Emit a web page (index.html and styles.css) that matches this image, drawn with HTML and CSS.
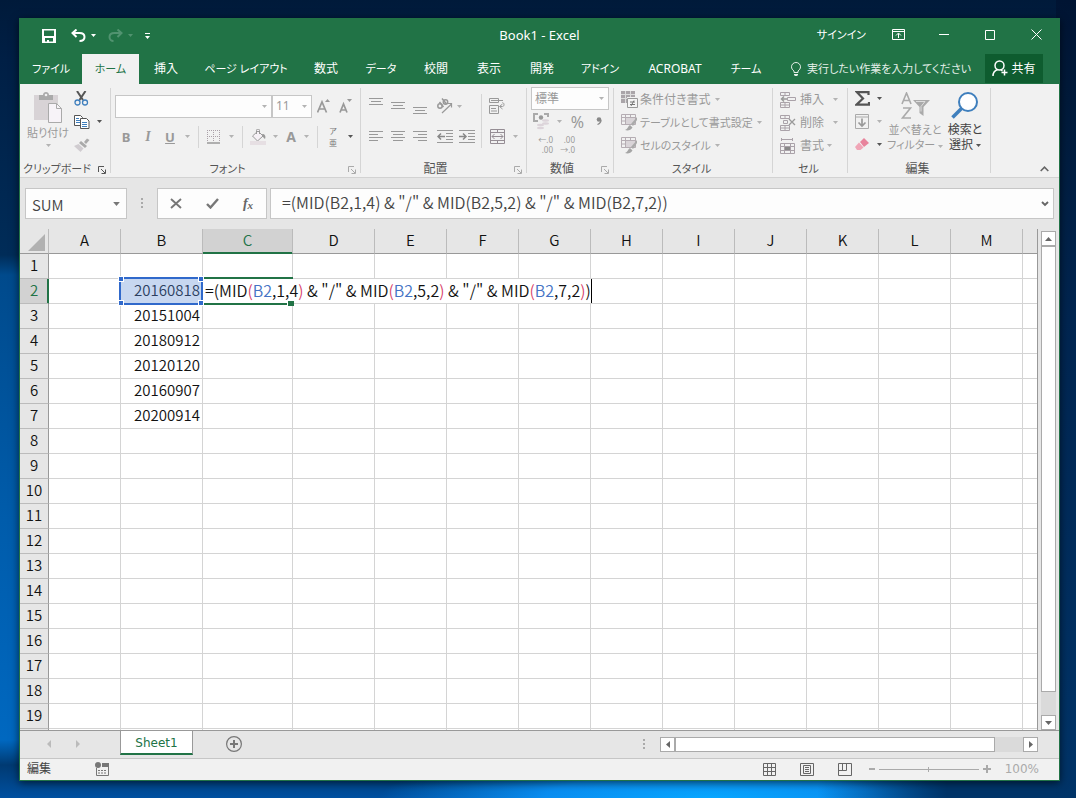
FILE: index.html
```html
<!DOCTYPE html>
<html lang="ja">
<head>
<meta charset="utf-8">
<title>Book1 - Excel</title>
<link rel="stylesheet" href="styles.css">
</head>
<body>
<svg class="sprite" aria-hidden="true">
  <symbol id="arrow" viewBox="0 0 5 3"><path d="M0 0h5L2.500 3z" fill="currentColor"/></symbol>
  <symbol id="launcher" viewBox="0 0 8 8"><path d="M.5 6V.5H6M3 3l4 4M7.500 3.500v4h-4" fill="none" stroke="currentColor"/></symbol>
  <symbol id="table-brush" viewBox="0 0 17 17"><path d="M.5.500h14v10H.5zM.5 3.500h14M.5 7h14M4.500.500v10M9.500.500v10" fill="none" stroke="#b5adb3"/><path d="M5 4h9v6H5z" fill="#d9d4d8"/><path d="M16 3l-6 7 2 2 4-6z" fill="#aaa"/><path d="M9 11l2.500 2.500C10 16 7 17 4 16c3-1 3-4 5-5z" fill="#a5a5a5"/></symbol>
</svg>
<main class="window">
  <header class="titlebar">
    <div class="quick">
      <button class="icon-btn w22" aria-label="上書き保存"><svg width="14" height="14" viewBox="0 0 14 14"><path fill="#fff" fill-rule="evenodd" d="M0 0h14v14H0zM2 1.500v5.500h10V1.500zM3 9v3.500h2V11h2v1.500h4V9z"/></svg></button>
      <button class="icon-btn w22" aria-label="元に戻す"><svg width="15" height="13" viewBox="0 0 15 13"><path d="M5.500 0.500L1.500 4l4 4M2 4h6.500c3 0 5 1.500 5 4s-2 4-5 4" fill="none" stroke="#fff" stroke-width="2"/></svg></button>
      <button class="icon-btn w12" aria-label="元に戻す一覧"><svg class="arrow"><use href="#arrow"/></svg></button>
      <button class="icon-btn w22 redo" aria-label="やり直し"><svg width="15" height="13" viewBox="0 0 15 13"><path d="M9.500 0.500L13.500 4l-4 4M13 4H6.500c-3 0-5 1.500-5 4s2 4 4 4" fill="none" stroke="#519370" stroke-width="2"/></svg></button>
      <button class="icon-btn w12 redo" aria-label="やり直し一覧"><svg class="arrow"><use href="#arrow"/></svg></button>
      <button class="icon-btn custom" aria-label="カスタマイズ"><svg width="5" height="6" viewBox="0 0 5 6"><path d="M0 0h5v1H0zM0 3h5L2.500 6z" fill="#fff"/></svg></button>
    </div>
    <h1 class="title">Book1 - Excel</h1>
    <div class="caption">
      <button class="signin kana">サインイン</button>
      <button class="icon-btn cap" aria-label="リボンの表示オプション"><svg width="13" height="11" viewBox="0 0 13 11"><path d="M.5.500h12v10H.5zM.5 2.500h12M6.500 9V4.500M4 6.500l2.500-2.500L9 6.500" fill="none" stroke="#fff"/></svg></button>
      <button class="icon-btn cap" aria-label="最小化"><svg width="10" height="11" viewBox="0 0 10 11"><path d="M0 5.500h10" stroke="#fff"/></svg></button>
      <button class="icon-btn cap" aria-label="最大化"><svg width="10" height="10" viewBox="0 0 10 10"><path d="M.5.500h9v9h-9z" fill="none" stroke="#fff"/></svg></button>
      <button class="icon-btn cap" aria-label="閉じる"><svg width="11" height="11" viewBox="0 0 11 11"><path d="M.5.500l10 10M10.500.500l-10 10" stroke="#fff"/></svg></button>
    </div>
  </header>

  <nav class="tabs">
    <button class="kana">ファイル</button><button class="kana active">ホーム</button><button>挿入</button><button class="kana">ページ レイアウト</button><button>数式</button><button class="kana">データ</button><button>校閲</button><button>表示</button><button>開発</button><button class="kana">アドイン</button><button>ACROBAT</button><button class="kana">チーム</button>
    <button class="tell kana"><svg width="10" height="14" viewBox="0 0 10 14"><path d="M3 10.500V9C1.500 8 .5 6.500.5 4.800a4.500 4.300 0 0 1 9 0C9.500 6.500 8.500 8 7 9v1.500zM3 12.500h4M3.500 13.500h3" fill="none" stroke="#e4efe8"/></svg>実行したい作業を入力してください</button>
    <button class="share"><svg width="16" height="17" viewBox="0 0 16 17"><circle cx="7.500" cy="5.500" r="4.500" fill="none" stroke="#fff" stroke-width="1.500"/><path d="M1 16c0-3 2-5.500 4.500-6.500M9 10l1.500 1M12.500 9.500v6M9.500 12.500h6" fill="none" stroke="#fff" stroke-width="1.500"/></svg>共有</button>
  </nav>

  <section class="ribbon">
    <div class="group g-clip">
      <div class="body">
        <button class="big dim kana paste">
          <svg width="29" height="31" viewBox="0 0 29 31"><path d="M0 3h24v25H0z" fill="#d8d3d6"/><path d="M5 8V3h4c0-4 6-4 6 0h4v5z" fill="#aaa"/><circle cx="12" cy="3" r="1.300" fill="#f1f1f1"/><path d="M14.500 11.500h8l5 5v14h-13z" fill="#f7f3f8" stroke="#aaa"/><path d="M22.500 11.500v5h5" fill="none" stroke="#aaa"/></svg>
          <span>貼り付け</span><svg class="arrow"><use href="#arrow"/></svg>
        </button>
        <div class="stack">
          <button class="icon-btn line" aria-label="切り取り"><svg width="15" height="15" viewBox="0 0 15 15"><path d="M3 0l6 9M11.500 0l-6 9" stroke="#555" stroke-width="2"/><circle cx="3.500" cy="11.500" r="2.500" fill="none" stroke="#3f7fbd" stroke-width="1.300"/><circle cx="11" cy="11.500" r="2.500" fill="none" stroke="#3f7fbd" stroke-width="1.300"/></svg></button>
          <button class="icon-btn line" aria-label="コピー"><svg width="16" height="14" viewBox="0 0 16 14"><path d="M.5.500h6l2 2v8h-8z" fill="#fff" stroke="#555"/><path d="M2 3.500h3M2 5.500h4M2 7.500h4" stroke="#3f7fbd"/><path d="M6.500 3.500h6l2.500 2.500v7.500H6.500z" fill="#fff" stroke="#555"/><path d="M8 7.500h5M8 9.500h5M8 11.500h5" stroke="#3f7fbd"/></svg><svg class="arrow dark"><use href="#arrow"/></svg></button>
          <button class="icon-btn line" aria-label="書式のコピー"><svg width="16" height="14" viewBox="0 0 16 14"><path d="M15.500 2L13 .5 10 4l2 2z" fill="#aaa"/><path d="M7 3l6 5-2 2-6-5z" fill="#aaa"/><path d="M4.500 6l5 4.500L6.500 14 0 8z" fill="#d0ccd0"/></svg></button>
        </div>
      </div>
      <footer class="kana"><span>クリップボード</span><svg class="launch dark"><use href="#launcher"/></svg></footer>
    </div>

    <div class="group g-font">
      <div class="body rows">
        <div class="row first">
          <label class="combo font-name"><select aria-label="フォント"><option></option></select><svg class="arrow"><use href="#arrow"/></svg></label>
          <label class="combo font-size"><select aria-label="サイズ"><option>11</option></select><svg class="arrow"><use href="#arrow"/></svg></label>
          <button class="icon-btn w22" aria-label="拡大"><svg width="13" height="15" viewBox="0 0 13 15"><path d="M.5 13.500L5 3l4.500 10.500M2 10h6" fill="none" stroke="#999" stroke-width="1.700"/><path d="M8 3l2.500-3L13 3z" fill="#999"/></svg></button>
          <button class="icon-btn w22" aria-label="縮小"><svg width="13" height="15" viewBox="0 0 13 15"><path d="M1 13.500L4.500 5 8 13.500M2 11h5" fill="none" stroke="#999" stroke-width="1.700"/><path d="M8 0h5l-2.500 3z" fill="#999"/></svg></button>
        </div>
        <div class="row">
          <button class="icon-btn w22 glyph"><b>B</b></button><button class="icon-btn w22 glyph"><i>I</i></button><button class="icon-btn w22 glyph"><u>U</u></button>
          <button class="icon-btn w12" aria-label="下線の種類"><svg class="arrow"><use href="#arrow"/></svg></button>
          <span class="sep"></span>
          <button class="icon-btn w22" aria-label="罫線"><svg width="14" height="14" viewBox="0 0 14 14"><path d="M.5 0v12M6.500 0v12M12.500 0v12M0 .5h13M0 6.500h13" stroke="#aaa0a8" stroke-dasharray="1 1" fill="none"/><path d="M0 13h13" stroke="#999" stroke-width="1.500"/></svg></button>
          <button class="icon-btn w12" aria-label="罫線の種類"><svg class="arrow"><use href="#arrow"/></svg></button>
          <span class="sep"></span>
          <button class="icon-btn w22" aria-label="塗りつぶし"><svg width="17" height="16" viewBox="0 0 17 16"><path d="M2.500 7L8 2l5 5-5.500 5zM6.500 5V1.500a1.500 1.500 0 0 1 3 0V5" fill="#f6f1f6" stroke="#999"/><path d="M12 5c3 0 4 2 3 5-2-1-2-3-3-5z" fill="#999"/><path d="M0 12h16v4H0z" fill="#e6dfe3"/></svg></button>
          <button class="icon-btn w12" aria-label="塗りつぶしの色"><svg class="arrow"><use href="#arrow"/></svg></button>
          <button class="icon-btn fcolor"><span>A</span></button>
          <button class="icon-btn w12" aria-label="文字色"><svg class="arrow"><use href="#arrow"/></svg></button>
          <span class="sep"></span>
          <button class="icon-btn ruby" aria-label="ふりがな"><span>ア</span><span>亜</span></button>
          <button class="icon-btn w12" aria-label="ふりがなの設定"><svg class="arrow dark"><use href="#arrow"/></svg></button>
        </div>
      </div>
      <footer class="kana"><span>フォント</span><svg class="launch"><use href="#launcher"/></svg></footer>
    </div>

    <div class="group g-align">
      <div class="body">
        <div class="rows">
        <div class="row first">
          <button class="icon-btn w22" aria-label="上揃え"><svg width="14" height="20" viewBox="0 0 14 20"><path d="M0 2.500h14M2 5.500h10M0 8.500h14" stroke="#999"/></svg></button>
          <button class="icon-btn w22" aria-label="上下中央揃え"><svg width="14" height="20" viewBox="0 0 14 20"><path d="M0 6.500h14M2 9.500h10M0 12.500h14" stroke="#999"/></svg></button>
          <button class="icon-btn w22" aria-label="下揃え"><svg width="14" height="20" viewBox="0 0 14 20"><path d="M0 11.500h14M2 14.500h10M0 17.500h14" stroke="#999"/></svg></button>
          <button class="icon-btn orient" aria-label="方向"><svg width="17" height="16" viewBox="0 0 17 16"><g fill="none" stroke="#999" stroke-width="1.500"><circle cx="4" cy="8" r="2.200"/><path d="M3.500 4l4 5M6 .5l4.500 5.500"/><circle cx="9.500" cy="4" r="2.200"/><path d="M6 15l9.500-9M15.500 9.500V5.500H11.500" stroke-width="1.200"/></g></svg><svg class="arrow"><use href="#arrow"/></svg></button>
        </div>
        <div class="row">
          <button class="icon-btn w22" aria-label="左揃え"><svg width="14" height="11" viewBox="0 0 14 11"><path d="M0 .5h14M0 3.500h9M0 6.500h14M0 9.500h9" stroke="#999"/></svg></button>
          <button class="icon-btn w22" aria-label="中央揃え"><svg width="14" height="11" viewBox="0 0 14 11"><path d="M0 .5h14M2 3.500h10M0 6.500h14M2 9.500h10" stroke="#999"/></svg></button>
          <button class="icon-btn w22" aria-label="右揃え"><svg width="14" height="11" viewBox="0 0 14 11"><path d="M0 .5h14M5 3.500h9M0 6.500h14M5 9.500h9" stroke="#999"/></svg></button>
          <span class="gap"></span>
          <button class="icon-btn w22" aria-label="インデントを減らす"><svg width="16" height="13" viewBox="0 0 16 13"><path d="M0 .5h16M9 3.500h7M9 6.500h7M9 9.500h7M0 12.500h16" stroke="#999"/><path d="M8 6.500H1M4 3.500l-3 3 3 3" fill="none" stroke="#888" stroke-width="1.500"/></svg></button>
          <button class="icon-btn w22" aria-label="インデントを増やす"><svg width="16" height="13" viewBox="0 0 16 13"><path d="M0 .5h16M9 3.500h7M9 6.500h7M9 9.500h7M0 12.500h16" stroke="#999"/><path d="M0 6.500h7M4 3.500l3 3-3 3" fill="none" stroke="#888" stroke-width="1.500"/></svg></button>
        </div>
        </div>
        <span class="sep tall"></span>
        <div class="rows">
          <div class="row first"><button class="icon-btn w22" aria-label="折り返し"><svg width="17" height="16" viewBox="0 0 17 16"><path d="M.5.500h9v4h-9zM2 2.500h12M.5 7.500h9v8h-9zM2 10.500h5M2 13h6M11 8.500h2.500c2 0 2-3.500 0-4M13.500 6l-3 2.500 3 2.500" fill="none" stroke="#999"/></svg></button></div>
          <div class="row"><button class="icon-btn w22" aria-label="結合"><svg width="15" height="15" viewBox="0 0 15 15"><path d="M.5.500h14v14H.5zM.5 3.500h14M.5 11.500h14M7.500.500v3M7.500 11.500v3M2 7.500h11M4.500 5l-2.500 2.500L4.500 10M10.500 5L13 7.500 10.500 10" fill="none" stroke="#958d94"/></svg></button><button class="icon-btn w12" aria-label="結合の種類"><svg class="arrow"><use href="#arrow"/></svg></button></div>
        </div>
      </div>
      <footer><span>配置</span><svg class="launch"><use href="#launcher"/></svg></footer>
    </div>

    <div class="group g-num">
      <div class="body rows tight">
        <label class="combo number-format"><select aria-label="表示形式"><option>標準</option></select><svg class="arrow"><use href="#arrow"/></svg></label>
        <div class="row"><button class="icon-btn w22" aria-label="通貨"><svg width="17" height="17" viewBox="0 0 17 17"><path d="M1 5V1h4M11 1h4v3M1 5v3h4" fill="none" stroke="#aaa" stroke-width="2"/><circle cx="8" cy="4.500" r="2.200" fill="#999"/><g fill="#dcd4da"><ellipse cx="12.500" cy="7.500" rx="3.500" ry="1.200"/><ellipse cx="12.500" cy="10.500" rx="3.500" ry="1.200"/><ellipse cx="7.500" cy="12" rx="3.500" ry="1.200"/><ellipse cx="7.500" cy="15" rx="3.500" ry="1.200"/></g></svg></button>
        <button class="icon-btn w12" aria-label="通貨の種類"><svg class="arrow"><use href="#arrow"/></svg></button>
        <button class="icon-btn w22 pct">%</button><button class="icon-btn w22" aria-label="桁区切り"><svg width="6" height="10" viewBox="0 0 6 10"><circle cx="3" cy="2.500" r="2.300" fill="#888"/><path d="M5 3c0 2-1 3.500-3.500 4.500" fill="none" stroke="#888" stroke-width="1.300"/></svg></button></div>
        <div class="row"><button class="icon-btn w22 dec"><span>←.0</span><span>.00</span></button><button class="icon-btn w22 dec"><span>.00</span><span>→.0</span></button></div>
      </div>
      <footer><span>数値</span><svg class="launch"><use href="#launcher"/></svg></footer>
    </div>

    <div class="group g-style">
      <div class="body list">
        <button><svg width="17" height="17" viewBox="0 0 17 17"><path d="M0 0h14v6H0zM0 6h6v6H0z" fill="#aaa5a9"/><path d="M0 3.500h14M4.500 0v12M9.500 0v6M0 7.500h6" stroke="#ddd"/><path d="M6.500 7.500h10v9h-10z" fill="#f5f5f5" stroke="#999"/><path d="M9 11h5M9 13.500h5M13 9.500l-3 5.500" stroke="#777"/></svg>条件付き書式<svg class="arrow"><use href="#arrow"/></svg></button>
        <button class="kana"><svg width="17" height="17"><use href="#table-brush"/></svg>テーブルとして書式設定<svg class="arrow"><use href="#arrow"/></svg></button>
        <button class="kana"><svg width="17" height="17"><use href="#table-brush"/></svg>セルのスタイル<svg class="arrow"><use href="#arrow"/></svg></button>
      </div>
      <footer class="kana"><span>スタイル</span></footer>
    </div>

    <div class="group g-cell">
      <div class="body list">
        <button><svg width="17" height="16" viewBox="0 0 17 16"><path d="M.5.500h9v3h-9zM5 .5v3M.5 10.500h9v5h-9zM.5 13h9M5 10.500v5M7.500 5.500h8v3h-8z" fill="none" stroke="#aaa2a9"/><path d="M7 7H1.500M4 4.500L1.500 7 4 9.500" fill="none" stroke="#999" stroke-width="1.500"/></svg><span>挿入</span><svg class="arrow"><use href="#arrow"/></svg></button>
        <button><svg width="17" height="16" viewBox="0 0 17 16"><path d="M.5.500h9v3h-9zM5 .5v3M.5 10.500h9v5h-9zM.5 13h9M5 10.500v5M3.500 5.500h4v3h-4z" fill="none" stroke="#aaa2a9"/><path d="M9 4l6 6M15 4l-6 6" stroke="#999" stroke-width="1.300"/></svg><span>削除</span><svg class="arrow"><use href="#arrow"/></svg></button>
        <button><svg width="17" height="16" viewBox="0 0 17 16"><path d="M1.500 0v3M12.500 0v3M2 1.500h10M.5 5.500h14v10H.5zM.5 8.500h14M.5 12.500h14M4.500 5.500v10M10.500 5.500v10" fill="none" stroke="#aaa2a9"/><path d="M5 9h5v3H5z" fill="#888"/></svg><span class="short">書式</span><svg class="arrow"><use href="#arrow"/></svg></button>
      </div>
      <footer class="kana"><span>セル</span></footer>
    </div>

    <div class="group g-edit">
      <div class="body">
        <div class="stack">
          <button class="icon-btn line" aria-label="オート SUM"><svg width="15" height="15" viewBox="0 0 15 15"><path d="M13.500 4V1.200H2L8 7.500l-6.500 6.200h12.500V11" fill="none" stroke="#555" stroke-width="2.200"/></svg><svg class="arrow dark"><use href="#arrow"/></svg></button>
          <button class="icon-btn line" aria-label="フィル"><svg width="15" height="15" viewBox="0 0 15 15"><path d="M.5.500h13v14H.5zM.5 3h13" fill="none" stroke="#aaa"/><path d="M7 4.500V12M3.500 8.500L7 12l3.500-3.500" fill="none" stroke="#999" stroke-width="1.700"/></svg><svg class="arrow"><use href="#arrow"/></svg></button>
          <button class="icon-btn line" aria-label="クリア"><svg width="15" height="13" viewBox="0 0 15 13"><path d="M9 0l5 5-5 4-4-5z" fill="#e8839c"/><path d="M4 4.500L8.500 9.500 5.500 12H2L0 9z" fill="#f0a5b6"/></svg><svg class="arrow dark"><use href="#arrow"/></svg></button>
        </div>
        <button class="big dim kana sort"><svg width="29" height="30" viewBox="0 0 29 30"><path d="M1 12L5.500 1 10 12M2.500 8.500h6M2 16h7.500L1.500 26H10" fill="none" stroke="#aaa" stroke-width="1.600"/><path d="M12 8h17l-6.500 7v9l-4-3v-6z" fill="#aaa"/><path d="M15 9.500h9l-4 5v5" fill="none" stroke="#ddd"/></svg><span>並べ替えと<br>フィルター <svg class="arrow"><use href="#arrow"/></svg></span></button>
        <button class="big find"><svg width="28" height="30" viewBox="0 0 28 30"><circle cx="17" cy="10" r="9" fill="#fff" stroke="#3f7fbd" stroke-width="2"/><path d="M10.500 16.500L1.500 25.500" stroke="#3f7fbd" stroke-width="3.500"/></svg><span>検索と<br>選択 <svg class="arrow dark"><use href="#arrow"/></svg></span></button>
      </div>
      <footer><span>編集</span></footer>
    </div>
    <button class="icon-btn collapse" aria-label="リボンを折りたたむ"><svg width="9" height="6" viewBox="0 0 9 6"><path d="M.7 5l3.800-3.800L8.300 5" fill="none" stroke="#666" stroke-width="1.600"/></svg></button>
  </section>

  <section class="formula">
    <label class="combo name-box"><select aria-label="名前ボックス"><option>SUM</option></select><svg class="arrow wide"><use href="#arrow"/></svg></label>
    <svg class="dots" width="2" height="11" viewBox="0 0 2 11"><path d="M0 0h2v2H0zM0 4h2v2H0zM0 8h2v2H0z" fill="#aaa"/></svg>
    <div class="fx-box">
      <button class="icon-btn" aria-label="キャンセル"><svg width="12" height="11" viewBox="0 0 12 11"><path d="M1 1l10 9M11 1L1 10" stroke="#777" stroke-width="1.900"/></svg></button>
      <button class="icon-btn" aria-label="入力"><svg width="13" height="11" viewBox="0 0 13 11"><path d="M1 6l3.500 3.500L12 1" fill="none" stroke="#777" stroke-width="2.400"/></svg></button>
      <button class="icon-btn fx"><i>f</i><small>x</small></button>
    </div>
    <div class="formula-field"><input type="text" aria-label="数式バー" value='=(MID(B2,1,4) &amp; "/" &amp; MID(B2,5,2) &amp; "/" &amp; MID(B2,7,2))'><button class="icon-btn" aria-label="展開"><svg width="8" height="6" viewBox="0 0 8 6"><path d="M1 1l3 3 3-3" fill="none" stroke="#666" stroke-width="1.900"/></svg></button></div>
  </section>

  <section class="sheet">
    <div class="grid-view">
      <table class="cells">
        <colgroup><col class="c-head"><col class="c-std"><col class="c-mid"><col class="c-wide"><col class="c-mid"><col class="c-std" span="9"><col></colgroup>
        <thead><tr><th class="corner"><svg width="17" height="17" viewBox="0 0 17 17"><path d="M17 0v17H0z" fill="#b1b1b1"/></svg></th><th>A</th><th>B</th><th class="sel">C</th><th>D</th><th>E</th><th>F</th><th>G</th><th>H</th><th>I</th><th>J</th><th>K</th><th>L</th><th>M</th><th></th></tr></thead>
        <tbody id="rows">
          <tr><th>1</th><td></td><td></td><td></td><td></td><td></td><td></td><td></td><td></td><td></td><td></td><td></td><td></td><td></td><td></td></tr>
          <tr><th class="sel">2</th><td></td><td class="ref">20160818<span class="ref-box"><i></i><i></i><i></i><i></i></span></td><td class="edit"><div class="editor" contenteditable="true" spellcheck="false">=(MID<span class="p">(</span><span class="r">B2</span>,1,4<span class="p">)</span> &amp; "/" &amp; MID<span class="p">(</span><span class="r">B2</span>,5,2<span class="p">)</span> &amp; "/" &amp; MID<span class="p">(</span><span class="r">B2</span>,7,2<span class="p">)</span>)</div><span class="edit-box"></span></td><td></td><td></td><td></td><td></td><td></td><td></td><td></td><td></td><td></td><td></td><td></td></tr>
        </tbody>
      </table>
    </div>
    <div class="vscroll"><button class="sb" aria-label="上"><svg width="7" height="4" viewBox="0 0 7 4"><path d="M0 4h7L3.500 0z" fill="#666"/></svg></button><div class="track"><div class="thumb"></div></div><button class="sb" aria-label="下"><svg width="7" height="4" viewBox="0 0 7 4"><path d="M0 0h7L3.500 4z" fill="#666"/></svg></button></div>
  </section>

  <section class="sheet-bar">
    <div class="tab-nav"><button class="icon-btn" aria-label="前のシート"><svg width="4" height="8" viewBox="0 0 4 8"><path d="M4 0v8L0 4z" fill="#bbb"/></svg></button><button class="icon-btn" aria-label="次のシート"><svg width="4" height="8" viewBox="0 0 4 8"><path d="M0 0v8l4-4z" fill="#bbb"/></svg></button></div>
    <button class="sheet-tab">Sheet1</button>
    <button class="icon-btn add" aria-label="新しいシート"><svg width="16" height="16" viewBox="0 0 16 16"><circle cx="8" cy="8" r="7.400" fill="none" stroke="#777" stroke-width="1.200"/><path d="M8 4v8M4 8h8" stroke="#777" stroke-width="2"/></svg></button>
    <svg class="dots push" width="2" height="11" viewBox="0 0 2 11"><path d="M0 0h2v2H0zM0 4h2v2H0zM0 8h2v2H0z" fill="#aaa"/></svg>
    <div class="hscroll"><button class="sb" aria-label="左"><svg width="4" height="7" viewBox="0 0 4 7"><path d="M4 0v7L0 3.500z" fill="#666"/></svg></button><div class="track"><div class="thumb"></div></div><button class="sb" aria-label="右"><svg width="4" height="7" viewBox="0 0 4 7"><path d="M0 0v7l4-3.500z" fill="#666"/></svg></button></div>
  </section>

  <footer class="status">
    <span class="mode">編集</span>
    <button class="icon-btn macro" aria-label="マクロの記録"><svg width="14" height="14" viewBox="0 0 14 14"><path d="M1.500 6v7.500h12V2" fill="none" stroke="#777"/><path d="M7 1h7v4H7z" fill="#777"/><circle cx="3" cy="3" r="3" fill="#777"/><path d="M3 8.500h9M3 11h9" stroke="#777" stroke-dasharray="2 1"/></svg></button>
    <div class="views">
      <button class="icon-btn" aria-label="標準"><svg width="13" height="13" viewBox="0 0 13 13"><path d="M.5.500h12v12H.5zM.5 4.500h12M.5 8.500h12M4.500.500v12M8.500.500v12" fill="none" stroke="#666"/></svg></button>
      <button class="icon-btn" aria-label="ページ レイアウト"><svg width="14" height="13" viewBox="0 0 14 13"><path d="M.5.500h13v12H.5zM3.500 2.500h7v8h-7zM5 4.500h4M5 6.500h4M5 8.500h4" fill="none" stroke="#666"/></svg></button>
      <button class="icon-btn" aria-label="改ページ プレビュー"><svg width="14" height="13" viewBox="0 0 14 13"><path d="M.5.500h13v12H.5zM.5 7.500h8V.5M4.500.500v7" fill="none" stroke="#666"/></svg></button>
    </div>
    <div class="zoom">
      <button class="icon-btn" aria-label="縮小"><svg width="6" height="2" viewBox="0 0 6 2"><path d="M0 0h6v2H0z" fill="#aaa"/></svg></button>
      <input type="range" aria-label="ズーム" min="10" max="190" value="100">
      <button class="icon-btn" aria-label="拡大"><svg width="8" height="8" viewBox="0 0 8 8"><path d="M0 3h8v2H0zM3 0h2v8H3z" fill="#aaa"/></svg></button>
      <span class="percent">100%</span>
    </div>
  </footer>
</main>
<script src="sheet.js"></script>
</body>
</html>
```
FILE: sheet.js
```js
const dates = { 3: '20151004', 4: '20180912', 5: '20120120', 6: '20160907', 7: '20200914' };
const body = document.getElementById('rows');
for (let r = 3; r <= 20; r++) {
  const tr = document.createElement('tr');
  const th = document.createElement('th');
  th.textContent = r < 20 ? r : '';
  tr.append(th);
  for (let c = 0; c < 14; c++) {
    const td = document.createElement('td');
    if (c === 1 && dates[r]) td.textContent = dates[r];
    tr.append(td);
  }
  body.append(tr);
}
```
FILE: styles.css
```css
* { box-sizing: border-box; }
html { height: 100%; }
body {
  margin: 0;
  height: 100%;
  padding: 18px 16px 17px 19px;
  display: flex;
  font: 12px/16px "Noto Sans", "Noto Sans CJK JP", sans-serif;
  font-feature-settings: "palt";
  color: #444;
  background:
    linear-gradient(180deg, #001433 0, #001a3a 100px, #002550 40%, #003468 100%) right / 20px 100% no-repeat,
    linear-gradient(90deg, transparent 76%, #003468 88%) bottom / 100% 20px no-repeat,
    radial-gradient(ellipse 330px 50px at 710px 100%, #08a6ff 0%, #0a8df0 50%, transparent 100%),
    linear-gradient(180deg, #001a3a 0, #001f45 60px, #002c58 255px, #004a8c 275px, #005cab 520px, #0068c0 740px, #003a72 765px, #0050a0 100%);
}
button, select, input { font: inherit; font-feature-settings: inherit; color: inherit; margin: 0; }
button { border: 0; background: none; padding: 0; white-space: nowrap; }
.sprite { display: none; }
svg { flex: none; }
.window {
  flex: 1;
  min-width: 0;
  display: flex;
  flex-direction: column;
  border: 1px solid #217346;
  background: #e6e6e6;
  box-shadow: 0 2px 8px rgba(0, 0, 0, .6);
}
.kana { font-size: 11px; }
.icon-btn { display: flex; align-items: center; justify-content: center; }
.w12 { width: 14px; }
.w22 { width: 22px; }
.arrow { width: 5px; height: 3px; color: #b3b3b3; }
.arrow.dark, .launch.dark { color: #555; }

.titlebar { height: 35px; padding-bottom: 4px; display: grid; grid-template-columns: 1fr auto 1fr; align-items: center; background: #217346; color: #fff; }
.quick { display: flex; padding: 2px 0 0 18px; }
.quick .w12 { width: 8px; }
.quick .w22 + .w22, .quick .w12 + .w22, .quick .custom { margin-left: 7px; }
.quick .custom { width: 12px; }
.quick .arrow { color: #fff; }
.quick .redo .arrow { color: #519370; }
.title { margin: 0; font-size: 13px; font-weight: 400; }
.caption { display: flex; justify-content: flex-end; }
.signin { margin-right: 9px; }
.caption .cap { width: 46px; height: 30px; }

.tabs {
  display: grid;
  grid-template-columns: 62px 57px 54px 106px 54px 56px 54px 52px 54px 62px 88px 54px 1fr 58px;
  height: 30px;
  padding-right: 16px;
  background: #217346;
  color: #fff;
}
.tabs .active { background: #f1f1f1; color: #217346; }
.tabs .tell { display: flex; align-items: center; gap: 6px; padding-left: 18px; color: #e4efe8; }
.tabs .share { display: flex; align-items: center; justify-content: center; gap: 3px; height: 29px; background: #0e5c2f; }

.ribbon { display: flex; height: 94px; background: #f1f1f1; border-bottom: 1px solid #d2d2d2; }
.group { display: flex; flex-direction: column; position: relative; color: #999; }
.group::after { content: ""; position: absolute; right: 0; top: 4px; bottom: 4px; width: 1px; background: #d5d5d5; }
.group .body { flex: 1; display: flex; }
.group footer { display: flex; height: 17px; align-items: center; padding-right: 4px; color: #555; }
.group footer span { flex: 1; text-align: center; white-space: nowrap; }
.launch { width: 8px; height: 8px; margin: 3px 1px 0 4px; color: #aaa; }
.g-clip { width: 91px; }
.g-font { width: 250px; }
.g-align { width: 166px; }
.g-num { width: 87px; }
.g-style { width: 159px; }
.g-cell { width: 75px; }
.g-edit { width: 143px; }
.big { display: flex; flex-direction: column; align-items: center; padding-top: 8px; color: #444; line-height: 15px; }
.big.dim { color: #999; }
.big span .arrow { vertical-align: middle; }
.paste { width: 50px; margin-left: 3px; }
.paste span { padding: 2px 0 4px; }
.sort { width: 60px; margin-left: 1px; }
.find { width: 40px; }
.stack { display: flex; flex-direction: column; padding-top: 3px; }
.line { height: 23px; width: 34px; justify-content: flex-start; gap: 7px; padding-left: 1px; }
.g-edit .line { width: 36px; padding-left: 7px; }
.rows { display: flex; flex-direction: column; }
.body.rows { flex-direction: column; }
.rows .row { display: flex; align-items: center; height: 25px; }
.rows .row.first { height: 24px; margin: 10px 0 6px; }
.g-font .row { padding-left: 4px; }
.combo { display: grid; align-items: center; height: 23px; }
.combo select { grid-area: 1 / 1; height: 100%; width: 100%; appearance: none; border: 1px solid #c6c6c6; border-radius: 0; background: #fdfdfd; padding: 0 3px; }
.combo .arrow { grid-area: 1 / 1; justify-self: end; margin-right: 5px; pointer-events: none; }
.font-name { width: 157px; }
.font-size { width: 40px; }
.number-format { width: 78px; }
.glyph { font-size: 13px; }
.glyph i { font-family: "Liberation Serif", serif; font-weight: 700; font-size: 14px; }
.glyph u { font-weight: 700; }
.fcolor { width: 18px; font-weight: 700; font-size: 14px; }
.sep { width: 1px; height: 22px; margin: 0 4px; background: #d5d5d5; }
.sep.tall { height: 54px; margin: 10px 4px 0 3px; }
.g-font .row .w12 { width: 13px; }
.ruby { width: 22px; flex-direction: column; font-size: 8px; line-height: 12px; color: #777; }
.g-align .body { padding-left: 4px; }
.orient { width: 36px; gap: 4px; }
.gap { width: 3px; }
.tight { padding: 3px 4px 0; }
.tight .row { height: 23px; }
.pct { font-size: 16px; }
.dec { flex-direction: column; align-items: flex-end; font-size: 8px; line-height: 10px; }
.list { flex-direction: column; padding: 4px 0 0 7px; }
.list button { display: flex; align-items: center; height: 23px; gap: 2px; }
.list button .arrow { margin-left: 2px; }
.g-cell .list span { width: 28px; text-align: left; padding-left: 1px; }
.g-cell .list .arrow { margin-left: 4px; }
.g-cell .list .short { width: 26px; }
.g-cell .list .short + .arrow { margin-left: 0; }
.collapse { margin: auto 10px 5px auto; }

.formula { display: flex; align-items: center; padding: 10px 5px; height: 51px; font-family: "Noto Sans CJK JP", sans-serif; font-size: 15px; font-feature-settings: normal; }
.name-box { width: 102px; height: 31px; }
.name-box select { padding: 2px 6px 0; font-weight: 350; }
.name-box .arrow.wide { width: 7px; height: 4px; margin-right: 7px; color: #777; }
.formula .dots { margin: 0 14px; }
.fx-box { display: flex; width: 110px; height: 31px; background: #fdfdfd; border: 1px solid #c6c6c6; }
.fx-box .icon-btn { flex: 1; }
.fx { font-family: "Liberation Serif", serif; color: #666; font-size: 14px; font-weight: 700; }
.fx small { font-size: 11px; font-style: italic; padding-top: 3px; }
.formula-field { flex: 1; display: flex; height: 31px; margin-left: 3px; background: #fdfdfd; border: 1px solid #c6c6c6; }
.formula-field input { flex: 1; min-width: 0; border: 0; background: none; padding: 0 0 4px 11px; outline: 0; font-size: 16px; font-weight: 350; }
.formula-field button { width: 16px; }

.sheet { flex: 1; min-height: 0; display: flex; }
.grid-view { flex: 1; min-width: 0; overflow: hidden; border-right: 1px solid #999; background: #fff; }
.cells { width: 100%; table-layout: fixed; border-collapse: separate; border-spacing: 0; font: 350 15px/20px "Noto Sans CJK JP", sans-serif; font-feature-settings: normal; color: #111; }
.c-head { width: 29px; }
.c-std { width: 72px; }
.c-mid { width: 82px; }
.c-wide { width: 90px; }
.cells th, .cells td { height: 25px; padding: 0 0 2px; border-right: 1px solid #d4d4d4; border-bottom: 1px solid #d4d4d4; white-space: nowrap; }
.cells th { font-weight: 350; background: #e6e6e6; text-align: center; border-color: #bbb; }
.cells thead th { border-bottom-color: #999; }
.cells tbody th { border-right-color: #999; }
.cells td { text-align: right; padding-right: 2px; }
.cells td:last-child, .cells thead th:last-child { border-right: 0; }
.cells th.sel { background: #d2d2d2; color: #217346; }
.cells thead th.sel { box-shadow: inset 0 -1px #217346; border-bottom-color: #217346; }
.cells tbody th.sel { box-shadow: inset -1px 0 #217346; border-right-color: #217346; }
.corner svg { display: block; margin: 4px 3px 0 auto; }
.cells .ref { position: relative; background: #c7d7f0; color: #2c3f60; }
.ref-box { position: absolute; inset: -2px -1px -2px -2px; border: 2px solid #3069cb; z-index: 3; }
.ref-box i { position: absolute; width: 6px; height: 6px; background: #3069cb; border: 1px solid #fff; }
.ref-box i:nth-child(1) { left: -3px; top: -3px; }
.ref-box i:nth-child(2) { right: -3px; top: -3px; }
.ref-box i:nth-child(3) { left: -3px; bottom: -3px; }
.ref-box i:nth-child(4) { right: -3px; bottom: -3px; }
.cells .edit { position: relative; }
.editor { position: absolute; left: 0; top: 0; height: 24px; font-size: 16px; line-height: 22px; padding-left: 2px; background: #fff; border-right: 1px solid #000; outline: 0; z-index: 1; }
.edit-box { position: absolute; inset: -2px -1px; border: solid #217346; border-width: 2px 0; z-index: 2; pointer-events: none; }
.edit-box::after { content: ""; position: absolute; right: -1px; bottom: -3px; width: 6px; height: 5px; background: #217346; border: solid #fff; border-width: 0 0 0 1px; }
.p { color: #d8436a; }
.r { color: #4472c4; }

.track { flex: 1; display: flex; background: #dadada; }
.thumb { background: #fff; border: 1px solid #aaa; }
.sb { width: 15px; height: 15px; display: flex; align-items: center; justify-content: center; background: #fff; border: 1px solid #aaa; }
.vscroll { display: flex; flex-direction: column; width: 21px; padding: 2px 3px 0; }
.vscroll .track { width: 15px; flex-direction: column; }
.vscroll .thumb { height: 95%; }

.sheet-bar { display: flex; align-items: center; height: 28px; padding: 0 21px 1px 0; border-top: 1px solid #999; }
.tab-nav { display: flex; justify-content: center; gap: 25px; width: 100px; padding-right: 14px; }
.sheet-tab { align-self: flex-start; width: 73px; height: 24px; padding-top: 2px; background: #fff; border: solid #999; border-width: 0 1px; border-bottom: 2px solid #217346; font: 12px/20px "DejaVu Sans", sans-serif; color: #217346; }
.add { margin-left: 33px; }
.push { margin-left: auto; }
.hscroll { display: flex; width: 378px; margin-left: 15px; }
.hscroll .thumb { width: 92%; }

.status { display: flex; align-items: center; height: 22px; padding: 0 20px 1px 7px; background: #f1f1f1; border-top: 1px solid #c6c6c6; }
.macro { margin-left: 44px; }
.views { display: flex; gap: 24px; margin-left: auto; }
.zoom { display: flex; align-items: center; margin-left: 17px; color: #aaa; font: 12px/16px "DejaVu Sans", sans-serif; }
.zoom input {
  width: 100px;
  height: 7px;
  margin: 0 4px;
  appearance: none;
  background: linear-gradient(#aaa, #aaa) center / 1px 5px no-repeat, linear-gradient(#aaa, #aaa) center / 100% 1px no-repeat;
}
.zoom input::-webkit-slider-thumb { appearance: none; width: 1px; height: 5px; background: #aaa; }
.percent { margin-left: 14px; }
```
